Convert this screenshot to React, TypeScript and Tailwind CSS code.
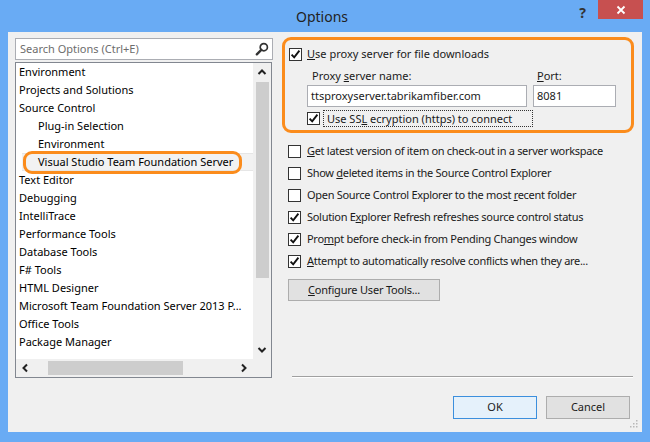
import React from 'react';

const treeItems: { label: string; indent?: boolean; selected?: boolean }[] = [
  { label: 'Environment' },
  { label: 'Projects and Solutions' },
  { label: 'Source Control' },
  { label: 'Plug-in Selection', indent: true },
  { label: 'Environment', indent: true },
  { label: 'Visual Studio Team Foundation Server', indent: true, selected: true },
  { label: 'Text Editor' },
  { label: 'Debugging' },
  { label: 'IntelliTrace' },
  { label: 'Performance Tools' },
  { label: 'Database Tools' },
  { label: 'F# Tools' },
  { label: 'HTML Designer' },
  { label: 'Microsoft Team Foundation Server 2013 P...' },
  { label: 'Office Tools' },
  { label: 'Package Manager' },
];

const Check = ({ on }: { on?: boolean }) => (
  <span className="w-[13px] h-[13px] border border-[#333333] bg-white flex items-center justify-center shrink-0">
    {on && (
      <svg width="11" height="11" viewBox="0 0 11 11">
        <path d="M1.6 5.6 L4.2 8.4 L9.4 1.6" fill="none" stroke="#111" strokeWidth="1.9" />
      </svg>
    )}
  </span>
);

const Chevron = ({ dir }: { dir: 'up' | 'down' | 'left' | 'right' }) => {
  const pts = {
    up: '1.5,6 5,2.5 8.5,6',
    down: '1.5,3 5,6.5 8.5,3',
    left: '6,1.5 2.5,5 6,8.5',
    right: '3,1.5 6.5,5 3,8.5',
  }[dir];
  return (
    <svg width="10" height="10" viewBox="0 0 10 10">
      <polyline points={pts} fill="none" stroke="#222" strokeWidth="2" />
    </svg>
  );
};

const options: { on: boolean; label: React.ReactNode }[] = [
  { on: false, label: <><u>G</u>et latest version of item on check-out in a server workspace</> },
  { on: false, label: <>Show <u>d</u>eleted items in the Source Control Explorer</> },
  { on: false, label: <>Open Source Control Explorer to the most <u>r</u>ecent folder</> },
  { on: true, label: <>Solution E<u>x</u>plorer Refresh refreshes source control status</> },
  { on: true, label: <>Pro<u>m</u>pt before check-in from Pending Changes window</> },
  { on: true, label: <><u>A</u>ttempt to automatically resolve conflicts when they are...</> },
];

export default function App() {
  return (
    <div className="w-[650px] h-[442px] bg-[#69abf4] flex flex-col px-[8px] pb-[10px] font-['Segoe_UI','Noto_Sans',sans-serif] text-[11px] text-[#1a1a1a] overflow-hidden">
      {/* title bar */}
      <div className="h-[32px] relative flex items-center justify-center shrink-0">
        <span className="text-[14px] text-[#222] pr-[6px]">Options</span>
        <span className="absolute right-[56px] top-[2px] text-[14px] font-bold text-[#333]">?</span>
        <div className="absolute -right-[1px] top-0 w-[45px] h-[19px] bg-[#c75050] flex items-center justify-center">
          <svg width="10" height="10" viewBox="0 0 10 10">
            <path d="M1.5 1.5 L8.5 8.5 M8.5 1.5 L1.5 8.5" stroke="#fff" strokeWidth="1.8" />
          </svg>
        </div>
      </div>

      {/* client area */}
      <div className="flex-1 bg-[#f0f0f0] flex flex-col pt-[5px] relative">
        <div className="flex h-[341px]">
          {/* left column */}
          <div className="w-[258px] ml-[7px] mt-[1px] flex flex-col">
            <div className="h-[22px] border border-[#abadb3] bg-white flex items-center justify-between pl-[4px] pr-[3px]">
              <span className="text-[#6d6d6d]">Search Options (Ctrl+E)</span>
              <svg width="14" height="14" viewBox="0 0 14 14">
                <circle cx="8.8" cy="5.2" r="3.6" fill="none" stroke="#333" strokeWidth="1.7" />
                <path d="M6.3 7.8 L1.8 12.3" stroke="#333" strokeWidth="2.4" strokeLinecap="round" />
              </svg>
            </div>
            <div className="mt-[2px] w-[257px] h-[316px] border border-[#828790] bg-white flex flex-col">
              <div className="flex flex-1 min-h-0">
                <div className="flex-1 flex flex-col">
                  {treeItems.map((it, i) => (
                    <div
                      key={i}
                      className={
                        'h-[18px] flex items-center whitespace-nowrap text-black ' +
                        (it.indent ? 'ml-[6px] pl-[16px] ' : 'pl-[3px] ') +
                        (it.selected ? 'relative bg-[#f2f2f2] border-y border-[#e6e6e6]' : '')
                      }
                    >
                      {it.label}
                      {it.selected && (
                        <span className="absolute left-[1px] -top-[3px] w-[219px] h-[23px] border-[3px] border-[#fb8c1c] rounded-[9px]" />
                      )}
                    </div>
                  ))}
                </div>
                <div className="w-[18px] bg-[#f0f0f0] flex flex-col items-center">
                  <div className="h-[19px] flex items-center justify-center"><Chevron dir="up" /></div>
                  <div className="w-[13px] h-[196px] bg-[#cdcdcd]" />
                  <div className="flex-1" />
                  <div className="h-[18px] flex items-center justify-center"><Chevron dir="down" /></div>
                </div>
              </div>
              <div className="h-[18px] flex bg-[#f0f0f0]">
                <div className="flex-1 flex items-center">
                  <div className="w-[18px] flex justify-center pl-[2px]"><Chevron dir="left" /></div>
                  <div className="ml-[14px] w-[135px] h-[14px] bg-[#cdcdcd]" />
                  <div className="flex-1" />
                  <div className="w-[18px] flex justify-center"><Chevron dir="right" /></div>
                </div>
                <div className="w-[18px]" />
              </div>
            </div>
          </div>

          {/* right column */}
          <div className="ml-[9px] w-[352px] flex flex-col">
            <div className="h-[96px] border-[3px] border-[#fb8c1c] rounded-[9px] pl-[4px] pt-[8px]">
              <div className="flex items-center gap-[5px] h-[13px]">
                <Check on />
                <span><u>U</u>se proxy server for file downloads</span>
              </div>
              <div className="flex mt-[7px] ml-[18px] gap-[6px]">
                <div className="flex flex-col w-[220px]">
                  <span className="pl-[5px] h-[15px] leading-[15px]">Proxy <u>s</u>erver name:</span>
                  <div className="mt-[2px] h-[22px] border border-[#abadb3] bg-white flex items-center pl-[3px]">ttsproxyserver.tabrikamfiber.com</div>
                </div>
                <div className="flex flex-col w-[83px]">
                  <span className="pl-[4px] h-[15px] leading-[15px]"><u>P</u>ort:</span>
                  <div className="mt-[2px] h-[22px] border border-[#abadb3] bg-white flex items-center pl-[3px]">8081</div>
                </div>
              </div>
              <div className="flex items-center ml-[18px] mt-[3px]">
                <Check on />
                <span className="ml-[3px] h-[17px] w-[210px] border border-dotted border-[#333] pl-[3px] leading-[15px] whitespace-nowrap">
                  Use SS<u>L</u> ecryption (https) to connect
                </span>
              </div>
            </div>

            <div className="flex flex-col pl-[6px] mt-[7px]">
              {options.map((o, i) => (
                <div key={i} className="h-[22px] flex items-center gap-[6px]">
                  <Check on={o.on} />
                  <span className="whitespace-nowrap tracking-[-0.3px]">{o.label}</span>
                </div>
              ))}
              <button className="mt-[7px] w-[152px] h-[22px] bg-[#e1e1e1] border border-[#adadad] text-[#1a1a1a] tracking-[-0.2px]">
                <u>C</u>onfigure User Tools...
              </button>
            </div>

            <div className="flex-1" />
            <div className="ml-[10px] mr-[1px] h-[2px] border-t border-[#a0a0a0] bg-white" />
          </div>
        </div>

        {/* footer buttons */}
        <div className="flex justify-end gap-[9px] mt-[18px] mr-[12px]">
          <button className="w-[84px] h-[23px] bg-[#e5f1fb] border border-[#3c8fdd] text-[#1a1a1a]">OK</button>
          <button className="w-[84px] h-[23px] bg-[#e1e1e1] border border-[#adadad] text-[#1a1a1a]">Cancel</button>
        </div>

        <svg className="absolute right-[4px] bottom-[4px]" width="9" height="9" viewBox="0 0 9 9">
          <rect x="7" y="1" width="1.5" height="1.5" fill="#b8b8b8" />
          <rect x="4" y="4" width="1.5" height="1.5" fill="#b8b8b8" />
          <rect x="7" y="4" width="1.5" height="1.5" fill="#b8b8b8" />
          <rect x="1" y="7" width="1.5" height="1.5" fill="#b8b8b8" />
          <rect x="4" y="7" width="1.5" height="1.5" fill="#b8b8b8" />
          <rect x="7" y="7" width="1.5" height="1.5" fill="#b8b8b8" />
        </svg>
      </div>
    </div>
  );
}
